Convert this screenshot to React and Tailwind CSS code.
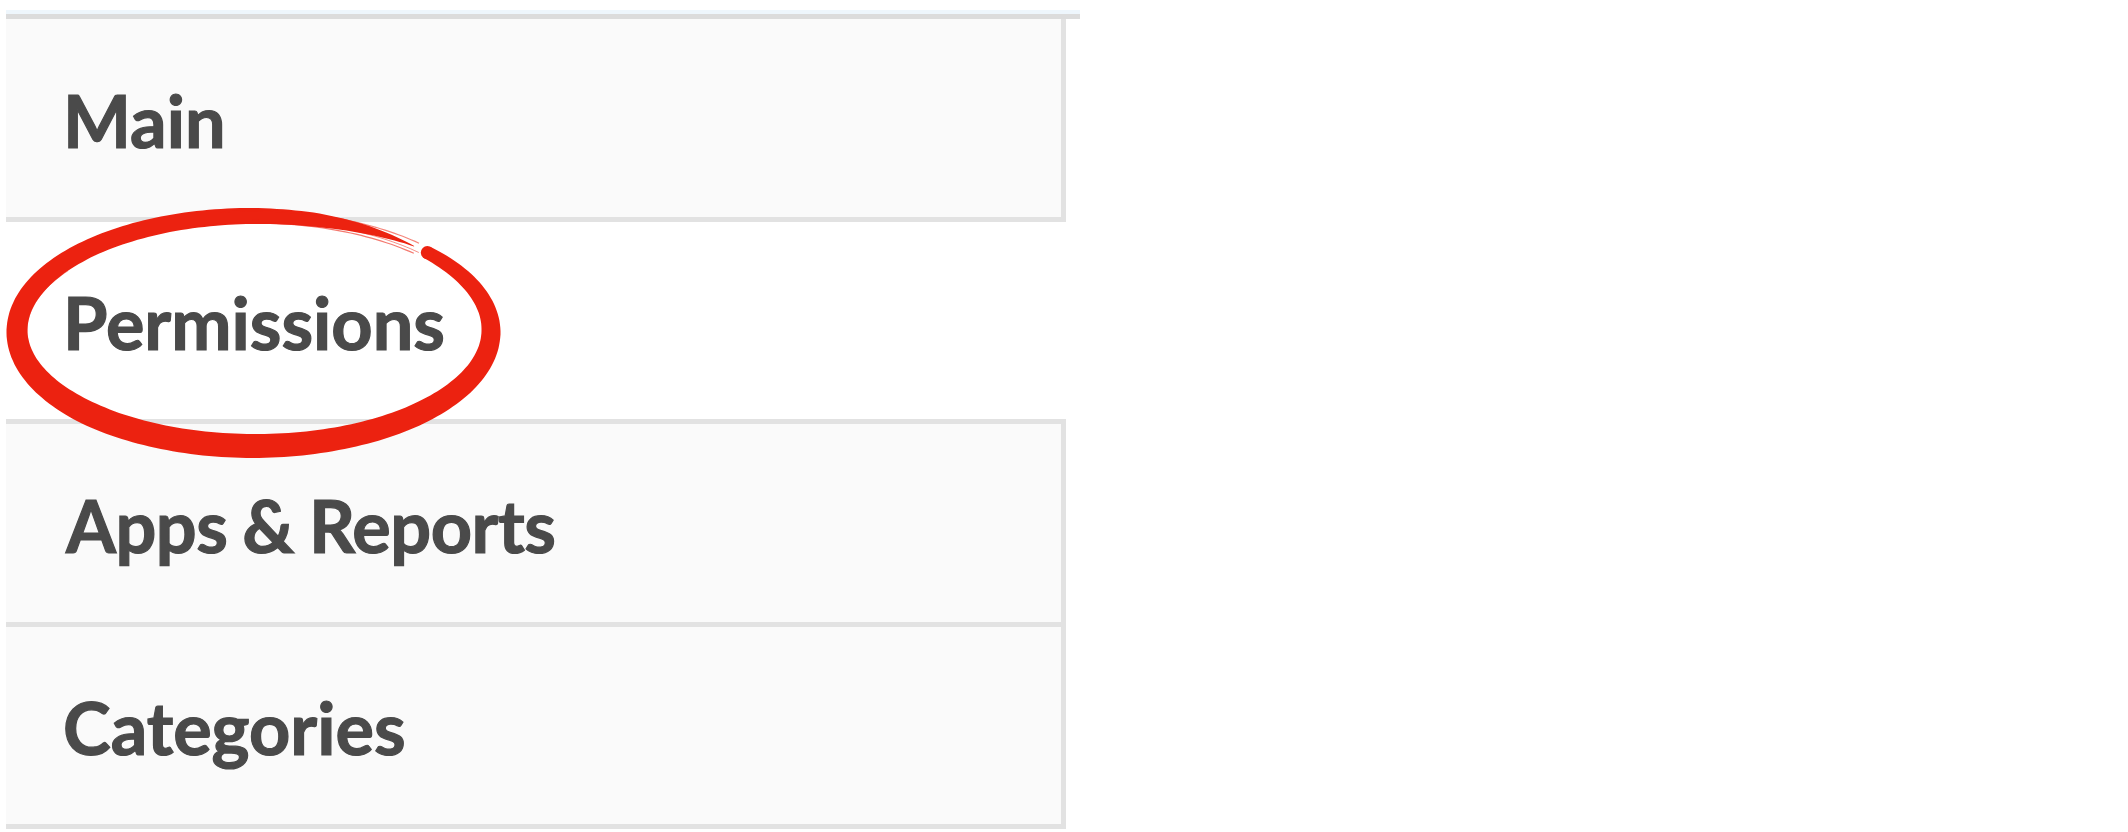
import React from "react";

function brushPath() {
  const cx = 254, cy = 331, a = 237, b = 115;
  const t0 = -43, t1 = 312.5;
  const widthAt = (deg) => {
    const pts = [
      [-43, 13], [-30, 15], [0, 19], [45, 22], [90, 24], [135, 24], [180, 21],
      [225, 18], [270, 16], [285, 14], [298, 9], [312.5, 0.5],
    ];
    for (let i = 0; i < pts.length - 1; i++) {
      const [d0, w0] = pts[i], [d1, w1] = pts[i + 1];
      if (deg >= d0 && deg <= d1) return w0 + ((deg - d0) / (d1 - d0)) * (w1 - w0);
    }
    return 0.5;
  };
  const outer = [], inner = [];
  const N = 240;
  for (let i = 0; i <= N; i++) {
    const deg = t0 + ((t1 - t0) * i) / N;
    const th = (deg * Math.PI) / 180;
    const x = cx + a * Math.cos(th), y = cy + b * Math.sin(th);
    let nx = b * Math.cos(th), ny = a * Math.sin(th);
    const l = Math.hypot(nx, ny);
    nx /= l; ny /= l;
    const w = widthAt(deg) / 2;
    outer.push([x + nx * w, y + ny * w]);
    inner.push([x - nx * w, y - ny * w]);
  }
  const f = (p) => `${p[0].toFixed(1)} ${p[1].toFixed(1)}`;
  let d = `M ${f(outer[0])}`;
  for (let i = 1; i < outer.length; i++) d += ` L ${f(outer[i])}`;
  for (let i = inner.length - 1; i >= 0; i--) d += ` L ${f(inner[i])}`;
  d += " Z";
  return d;
}

function strand(off, s, e) {
  const cx = 254, cy = 331, a = 237, b = 115;
  let d = "";
  const N = 40;
  for (let i = 0; i <= N; i++) {
    const deg = s + ((e - s) * i) / N;
    const th = (deg * Math.PI) / 180;
    const x = cx + (a + off) * Math.cos(th), y = cy + (b + off) * Math.sin(th);
    d += `${i === 0 ? "M" : " L"} ${x.toFixed(1)} ${y.toFixed(1)}`;
  }
  return d;
}

function Circle() {
  const th = (-43 * Math.PI) / 180;
  const start = [254 + 237 * Math.cos(th), 331 + 115 * Math.sin(th)];
  return (
    <svg className="absolute left-0 top-0 pointer-events-none" width="520" height="470" viewBox="0 0 520 470">
      <path d={brushPath()} fill="#ec2210" />
      <circle cx={start[0]} cy={start[1]} r="6.5" fill="#ec2210" />
      <path d={strand(-7, 255, 314)} stroke="#ec2210" strokeWidth="1.2" fill="none" opacity="0.6" />
      <path d={strand(-4, 260, 315)} stroke="#ec2210" strokeWidth="1" fill="none" opacity="0.5" />
      <path d={strand(5, 262, 313)} stroke="#ec2210" strokeWidth="1.2" fill="none" opacity="0.55" />
      <path d={strand(-10, 150, 215)} stroke="#ec2210" strokeWidth="1" fill="none" opacity="0.35" />
    </svg>
  );
}

const text =
  "text-[72px] leading-[1.2] font-bold text-[#4a4a4a] pt-[4px] [-webkit-text-stroke:1.2px_#4a4a4a]";

export default function App() {
  return (
    <div className="relative w-[2128px] h-[832px] bg-white overflow-hidden" style={{ fontFamily: "Lato, 'Open Sans', sans-serif" }}>
      <div className="pt-[10px] pl-[6px]">
        <div className="w-[1074px] h-[4px] bg-[#eef6fc]" />
        <div className="w-[1074px] h-[5px] bg-[#dcdcdc]" />
        <div className="w-[1060px]">
          <div className={`h-[203px] bg-[#fafafa] border-r-[5px] border-b-[5px] border-[#e2e2e2] flex items-center pl-[57px] ${text}`}>Main</div>
          <div className={`h-[197px] bg-white flex items-center pl-[57px] ${text}`}>Permissions</div>
          <div className={`h-[208px] bg-[#fafafa] border-t-[5px] border-r-[5px] border-b-[5px] border-[#e2e2e2] flex items-center pl-[60px] tracking-[-0.5px] [word-spacing:-2px] ${text}`}>Apps &amp; Reports</div>
          <div className={`h-[202px] bg-[#fafafa] border-r-[5px] border-b-[5px] border-[#e2e2e2] flex items-center pl-[57px] ${text}`}>Categories</div>
        </div>
      </div>
      <Circle />
    </div>
  );
}
